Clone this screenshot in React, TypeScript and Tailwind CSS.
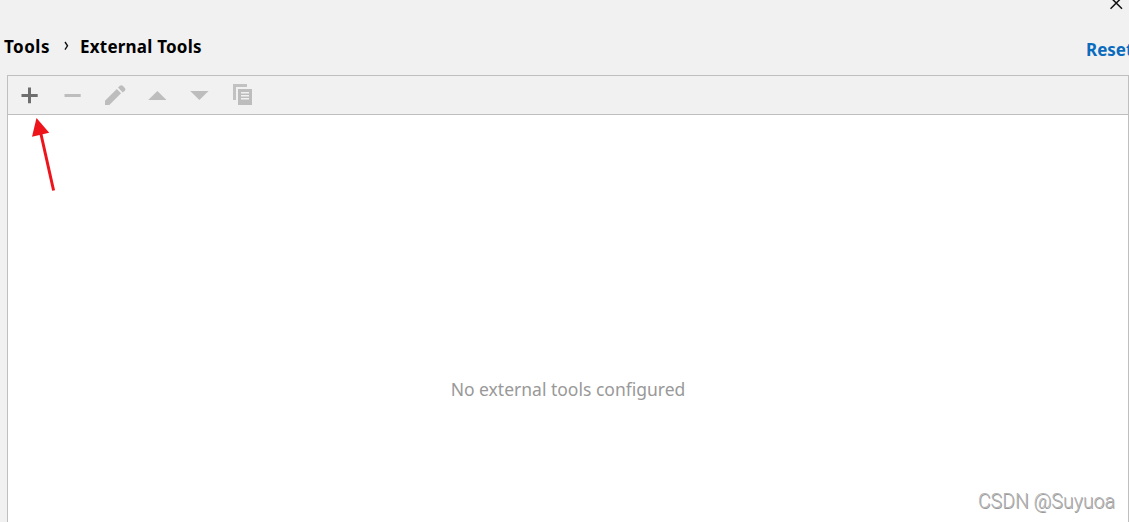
import type { ReactNode } from 'react'

function ToolButton({ label, className, children }: { label: string; className: string; children: ReactNode }) {
  return (
    <button type="button" aria-label={label} className={className}>
      <svg width="43" height="38" viewBox="0 0 43 38" fill="currentColor" className="block">
        {children}
      </svg>
    </button>
  )
}

const disabled = 'text-[#bdbdbd]'

function Toolbar() {
  return (
    <div className="flex h-[39px] shrink-0 border-b border-[#bfbfbf] bg-[#f1f1f1]">
      <ToolButton label="Add" className="text-[#6e6e6e]">
        <path d="M20 11.5h3v6.5h6.7v3H23V27.3h-3V21h-6.5v-3H20z" />
      </ToolButton>
      <ToolButton label="Remove" className={disabled}>
        <path d="M13.5 18h16.2v3H13.5z" />
      </ToolButton>
      <ToolButton label="Edit" className={disabled}>
        <path d="M11 24.7 22.8 13l4.3 4.3L15.3 29H11z" />
        <path d="m24 11.6 1.9-1.9q1.4-1.1 2.8 0l2.2 2.2q1.2 1.4.1 2.6l-2.2 2.1z" />
      </ToolButton>
      <ToolButton label="Move up" className={disabled}>
        <path d="M11.2 24 20.4 15l9.1 9z" />
      </ToolButton>
      <ToolButton label="Move down" className={disabled}>
        <path d="M10.2 15h18.4l-9.2 9z" />
      </ToolButton>
      <ToolButton label="Copy" className={disabled}>
        <path d="M10 8h14v3H13v13h-3z" opacity=".9" />
        <path fillRule="evenodd" d="M15 13h14v16H15zM18 16v1.5h8V16zM18 19v1.5h8V19zM18 22v1.5h8V22z" />
      </ToolButton>
    </div>
  )
}

export default function App() {
  return (
    <div className="relative flex h-[522px] w-[1129px] flex-col overflow-hidden bg-[#f1f1f1] font-['Noto_Sans','Open_Sans',sans-serif]">
      {/* Breadcrumb and page actions */}
      <header className="flex h-[75px] shrink-0 justify-between">
        <nav className="flex pt-[35px] pl-1 text-[17px] leading-6 font-bold text-black">
          <span className="w-[59px] tracking-[0.5px]">Tools</span>
          <svg width="17" height="24" viewBox="0 0 17 24" fill="none" stroke="#111" strokeWidth="1.4" className="block">
            <path d="m2 7 2.5 3.8L2 14.6" />
          </svg>
          <span className="tracking-[0.22px]">External Tools</span>
        </nav>
        <div className="flex w-[43px] flex-col">
          <button type="button" aria-label="Close" className="ml-6">
            <svg width="14" height="11" viewBox="0 0 14 11" fill="none" stroke="#111" strokeWidth="1.5" className="block">
              <path d="m.5-2.7 11.5 11.5M12-2.7.5 8.8" />
            </svg>
          </button>
          <a className="mt-[27px] text-[17px] leading-6 font-bold whitespace-nowrap text-[#0b6bbd]">Reset</a>
        </div>
      </header>

      <main className="ml-[7px] flex flex-1 flex-col border-x border-t border-[#bfbfbf] bg-white">
        <Toolbar />
        <p className="mt-[262px] text-center text-[17.5px] leading-6 text-[#999]">No external tools configured</p>
        <div className="mt-auto pr-[13px] pb-[6px] text-right font-['Roboto',sans-serif] text-[19.5px] leading-7 font-light text-[#b4b4b4] [text-shadow:0.7px_0.7px_0_#999]">
          CSDN @Suyuoa
        </div>
      </main>

      {/* Pointer to the Add button */}
      <svg className="absolute top-[116px] left-[30px]" width="28" height="78" viewBox="0 0 28 78">
        <path d="M10.5 16 23.6 74.5" stroke="#ee141c" strokeWidth="3" />
        <path d="M6.5 2 19.2 16.8 2 20.8z" fill="#ee141c" />
      </svg>
    </div>
  )
}
